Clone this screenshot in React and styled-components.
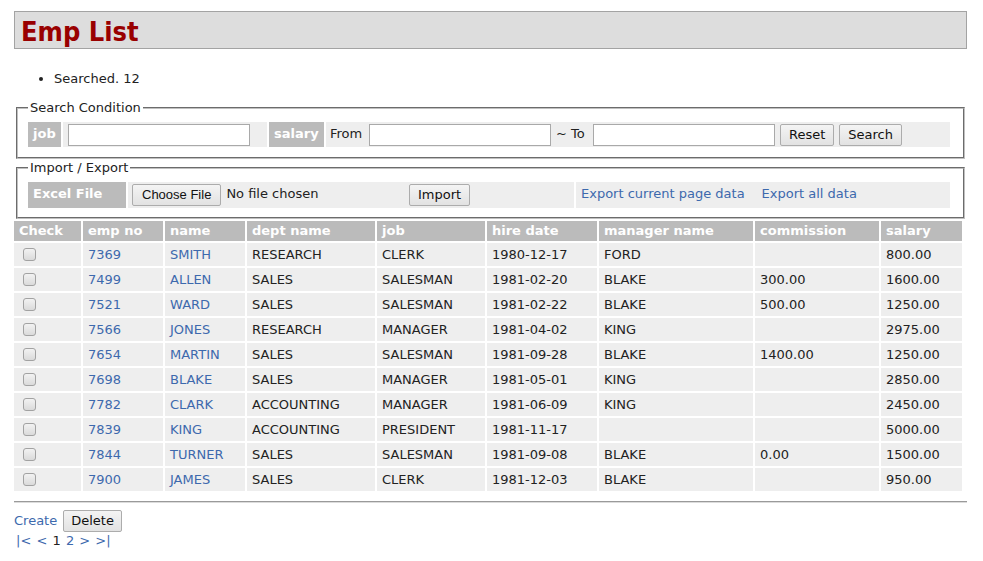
import React from "react";
import styled, { createGlobalStyle } from "styled-components";

const GlobalStyle = createGlobalStyle`
  *, *::before, *::after { box-sizing: border-box; }
  body {
    margin: 0;
    padding: 11px 16px 20px 14px;
    background: #fff;
    color: #222;
    font-family: Verdana, "DejaVu Sans", sans-serif;
    font-size: 13px;
    line-height: 16px;
  }
`;

const LINK = "#3d69ad";

const Title = styled.h1`
  margin: 0;
  height: 38px;
  padding: 3px 6px 0;
  background: #dddddd;
  border: 1px solid #a3a3a3;
  color: #990000;
  font-family: "DejaVu Sans Condensed", "DejaVu Sans", sans-serif;
  font-weight: bold;
  font-size: 27px;
  line-height: 33px;
`;

const Messages = styled.ul`
  margin: 22px 0 13px;
  padding-left: 40px;
`;

const Fieldset = styled.fieldset`
  margin: ${(p) => p.$mt || 0}px 2px 0;
  padding: 6px 13px ${(p) => p.$pb}px 10px;
  border: 2px groove #c0c0c0;
  min-width: 0;
`;

const Legend = styled.legend`
  padding: 0 2px;
  line-height: 16px;
`;

const FormRow = styled.div`
  display: flex;
  gap: 2px;
  height: ${(p) => p.$h}px;
`;

const LabelCell = styled.div`
  flex: 0 0 ${(p) => p.$w}px;
  background: #bbbbbb;
  color: #fff;
  font-weight: bold;
  padding: 2px 5px;
  line-height: 19px;
  white-space: nowrap;
`;

const FieldCell = styled.div`
  flex: ${(p) => (p.$w ? `0 0 ${p.$w}px` : "1 1 auto")};
  display: flex;
  align-items: flex-start;
  background: #eeeeee;
  padding: 2px ${(p) => p.$pl ?? 5}px;
  line-height: 19px;
  white-space: nowrap;
`;

const InlineLabel = styled.span`
  flex: 0 0 ${(p) => p.$w}px;
  padding-left: ${(p) => p.$pl || 0}px;
`;

const TextInput = styled.input`
  flex: 0 0 182px;
  width: 182px;
  height: 22px;
  margin: 0;
  padding: 1px 3px;
  border: 1px solid #a9a9a9;
  background: #fff;
  font: inherit;
`;

const Button = styled.button`
  flex: 0 0 auto;
  height: 22px;
  margin: 0 0 0 ${(p) => p.$ml || 0}px;
  padding: 0 ${(p) => p.$px || 8}px;
  background: linear-gradient(#f4f4f4, #e2e2e2);
  border: 1px solid #acacac;
  border-radius: 2px;
  color: #111;
  font-family: ${(p) => (p.$sys ? '"Liberation Sans", Arial, sans-serif' : 'Verdana, "DejaVu Sans", sans-serif')};
  font-size: 13px;
  line-height: 18px;
`;

const FileBox = styled.span`
  flex: 0 0 277px;
  display: flex;
  align-items: flex-start;
`;

const FileNote = styled.span`
  margin-left: 5px;
`;

const LinkGroup = styled.div`
  display: flex;
  gap: 17px;
`;

const Link = styled.a`
  color: ${LINK};
  text-decoration: none;
  cursor: pointer;
`;

const Grid = styled.table`
  width: 952px;
  margin: 0 0 0 -2px;
  border-spacing: 2px;
  table-layout: fixed;
`;

const Th = styled.th`
  width: ${(p) => p.$w}px;
  height: 20px;
  padding: 0 5px;
  background: #bbbbbb;
  color: #fff;
  font-weight: bold;
  text-align: left;
  white-space: nowrap;
  line-height: 16px;
`;

const Td = styled.td`
  height: 23px;
  padding: 0 5px;
  background: #eeeeee;
  white-space: nowrap;
  line-height: 16px;
`;

const Check = styled.input`
  appearance: none;
  display: block;
  width: 13px;
  height: 13px;
  margin: 0 0 0 4px;
  border: 1px solid #a2a2a2;
  border-radius: 3px;
  background: linear-gradient(#f2f2f2, #dadada);
`;

const Rule = styled.hr`
  margin: 8px 0 7px;
  border: 0;
  border-top: 1px solid #9a9a9a;
  border-bottom: 1px solid #dcdcdc;
`;

const Actions = styled.div`
  display: flex;
  align-items: center;
  gap: 6px;
`;

const Pager = styled.div`
  margin-top: 1px;
  padding-left: 2px;
  line-height: 16px;
  word-spacing: 1px;
`;

const columns = [
  ["Check", 67],
  ["emp no", 80],
  ["name", 80],
  ["dept name", 128],
  ["job", 108],
  ["hire date", 110],
  ["manager name", 154],
  ["commission", 124],
  ["salary", 81],
];

const rows = [
  ["7369", "SMITH", "RESEARCH", "CLERK", "1980-12-17", "FORD", "", "800.00"],
  ["7499", "ALLEN", "SALES", "SALESMAN", "1981-02-20", "BLAKE", "300.00", "1600.00"],
  ["7521", "WARD", "SALES", "SALESMAN", "1981-02-22", "BLAKE", "500.00", "1250.00"],
  ["7566", "JONES", "RESEARCH", "MANAGER", "1981-04-02", "KING", "", "2975.00"],
  ["7654", "MARTIN", "SALES", "SALESMAN", "1981-09-28", "BLAKE", "1400.00", "1250.00"],
  ["7698", "BLAKE", "SALES", "MANAGER", "1981-05-01", "KING", "", "2850.00"],
  ["7782", "CLARK", "ACCOUNTING", "MANAGER", "1981-06-09", "KING", "", "2450.00"],
  ["7839", "KING", "ACCOUNTING", "PRESIDENT", "1981-11-17", "", "", "5000.00"],
  ["7844", "TURNER", "SALES", "SALESMAN", "1981-09-08", "BLAKE", "0.00", "1500.00"],
  ["7900", "JAMES", "SALES", "CLERK", "1981-12-03", "BLAKE", "", "950.00"],
];

export default function App() {
  return (
    <>
      <GlobalStyle />
      <Title>Emp List</Title>
      <Messages>
        <li>Searched. 12</li>
      </Messages>

      <Fieldset $pb={10}>
        <Legend>Search Condition</Legend>
        <FormRow $h={25}>
          <LabelCell $w={33}>job</LabelCell>
          <FieldCell $w={204}>
            <TextInput type="text" />
          </FieldCell>
          <LabelCell $w={55}>salary</LabelCell>
          <FieldCell $pl={4}>
            <InlineLabel $w={39}>From</InlineLabel>
            <TextInput type="text" />
            <InlineLabel $w={42} $pl={5}>~ To</InlineLabel>
            <TextInput type="text" />
            <Button $ml={5}>Reset</Button>
            <Button $ml={5}>Search</Button>
          </FieldCell>
        </FormRow>
      </Fieldset>

      <Fieldset $mt={1} $pb={9}>
        <Legend>Import / Export</Legend>
        <FormRow $h={26}>
          <LabelCell $w={98}>Excel File</LabelCell>
          <FieldCell $w={446} $pl={4}>
            <FileBox>
              <Button $sys $px={9}>Choose File</Button>
              <FileNote>No file chosen</FileNote>
            </FileBox>
            <Button>Import</Button>
          </FieldCell>
          <FieldCell $pl={5}>
            <LinkGroup>
              <Link>Export current page data</Link>
              <Link>Export all data</Link>
            </LinkGroup>
          </FieldCell>
        </FormRow>
      </Fieldset>

      <Grid>
        <thead>
          <tr>
            {columns.map(([label, w]) => (
              <Th key={label} $w={w}>
                {label}
              </Th>
            ))}
          </tr>
        </thead>
        <tbody>
          {rows.map((r) => (
            <tr key={r[0]}>
              <Td>
                <Check type="checkbox" />
              </Td>
              <Td>
                <Link>{r[0]}</Link>
              </Td>
              <Td>
                <Link>{r[1]}</Link>
              </Td>
              {r.slice(2).map((v, i) => (
                <Td key={i}>{v}</Td>
              ))}
            </tr>
          ))}
        </tbody>
      </Grid>

      <Rule />
      <Actions>
        <Link>Create</Link>
        <Button $px={7}>Delete</Button>
      </Actions>
      <Pager>
        <Link>|&lt;</Link> <Link>&lt;</Link> 1 <Link>2</Link> <Link>&gt;</Link> <Link>&gt;|</Link>
      </Pager>
    </>
  );
}
